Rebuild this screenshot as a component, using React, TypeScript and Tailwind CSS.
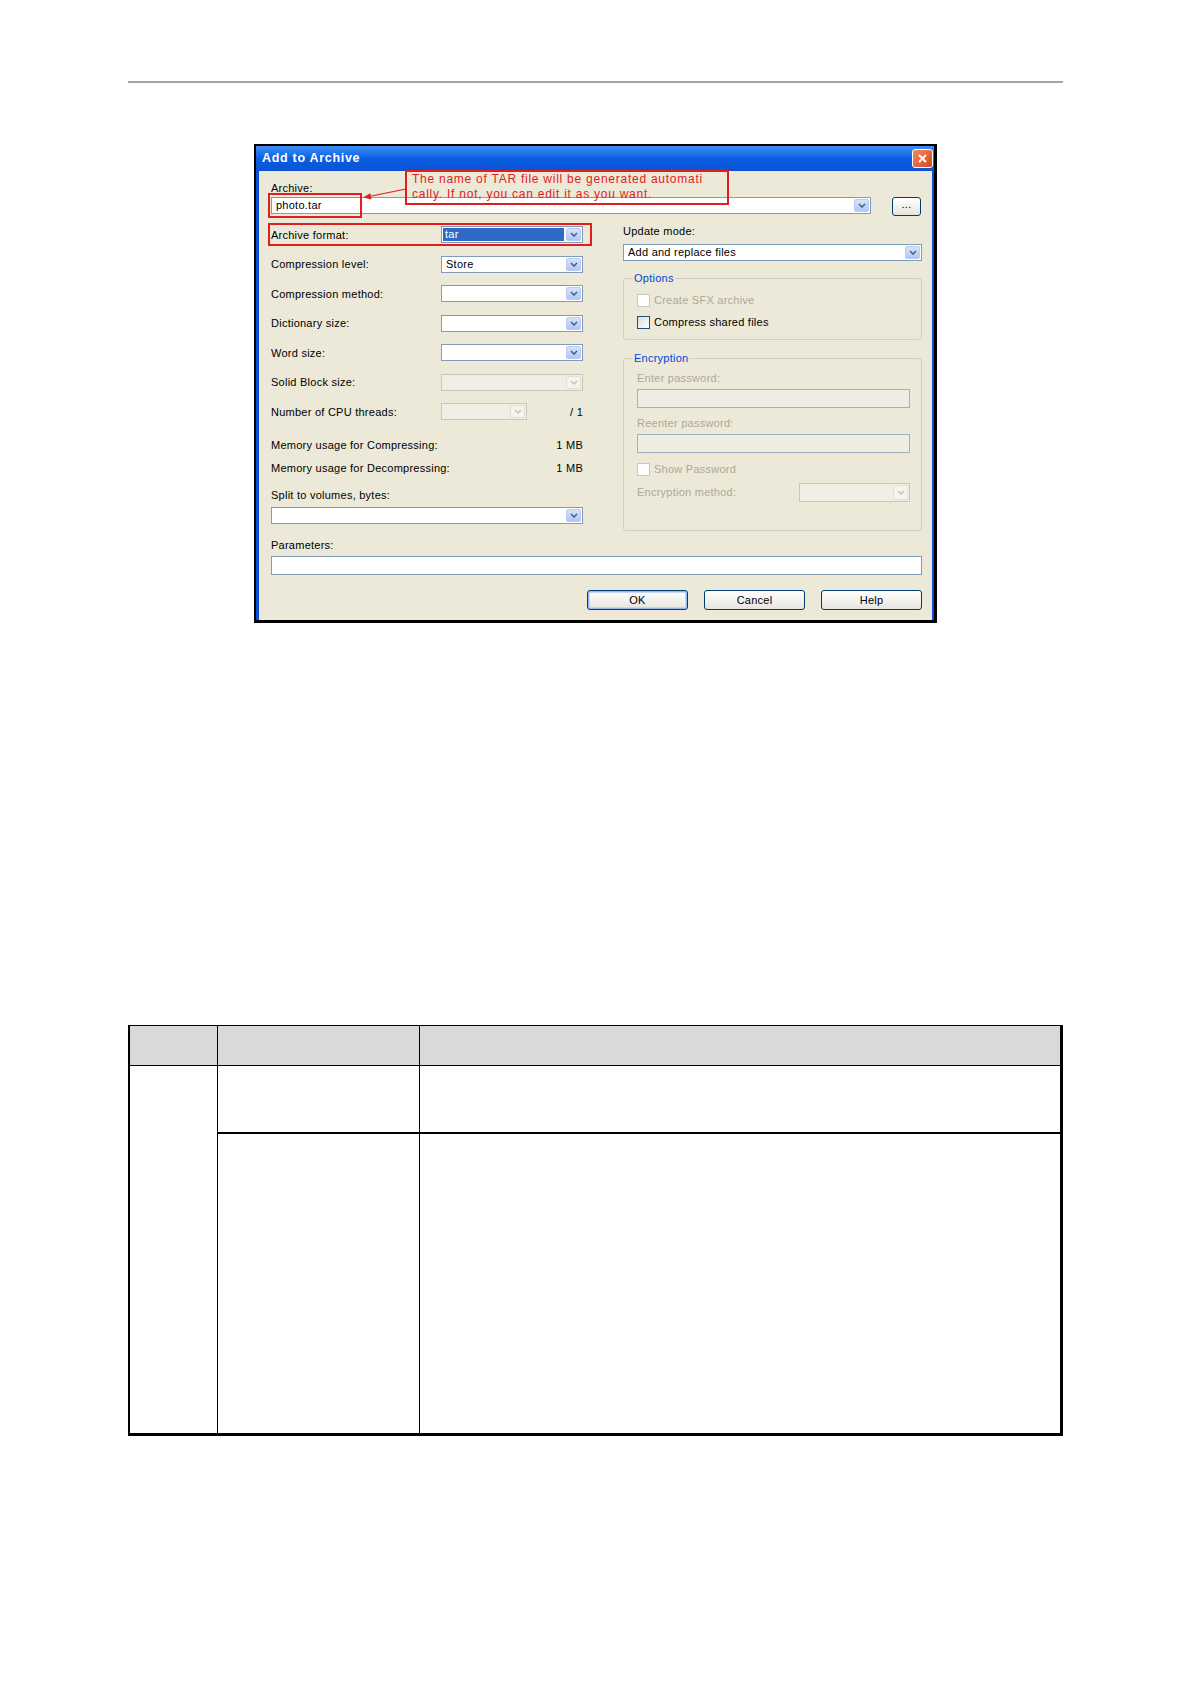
import type { ReactNode } from 'react'

const UI = "font-['Liberation_Sans','Arial',sans-serif] text-[11px] tracking-[0.25px]"

function Chevron({ disabled }: { disabled?: boolean }) {
  return (
    <svg width="8" height="5" viewBox="0 0 8 5" className="block">
      <path
        d="M1 1 L4 4 L7 1"
        fill="none"
        stroke={disabled ? '#c9c7ba' : '#4d6185'}
        strokeWidth="1.6"
      />
    </svg>
  )
}

function Combo({
  value,
  className,
  disabled,
  selected,
  tall,
}: {
  value?: string
  className: string
  disabled?: boolean
  selected?: boolean
  tall?: boolean
}) {
  return (
    <div
      className={`flex ${tall ? 'h-[19px]' : 'h-[17px]'} items-stretch border ${
        disabled ? 'border-[#c9c7ba] bg-[#f1efe5]' : 'border-[#7f9db9] bg-white'
      } ${className}`}
    >
      <div className="flex min-w-0 flex-1 items-stretch p-[1px]">
        {selected ? (
          <div className="flex flex-1 items-center bg-[#316ac5] pl-[2px] leading-none text-white">
            {value}
          </div>
        ) : (
          <div className="flex flex-1 items-center pl-[3px] leading-none text-black">{value}</div>
        )}
      </div>
      <div
        className={`m-[1px] flex w-[15px] items-center justify-center rounded-[2px] border ${
          disabled
            ? 'border-[#e2e0d6] bg-[#f4f3ee]'
            : 'border-[#b9cbf3] bg-gradient-to-b from-[#d7e3fd] to-[#b2c7f6]'
        }`}
      >
        <Chevron disabled={disabled} />
      </div>
    </div>
  )
}

function Check({ label, disabled }: { label: string; disabled?: boolean }) {
  return (
    <div className="flex h-[14px] items-center gap-[4px]">
      <div
        className={`h-[13px] w-[13px] border ${
          disabled
            ? 'border-[#cac8bb] bg-white'
            : 'border-[#1c5180] bg-gradient-to-br from-[#dcdcd6] to-white'
        }`}
      />
      <span className={disabled ? 'text-[#aca899]' : 'text-black'}>{label}</span>
    </div>
  )
}

function Group({ title, className, children }: { title: string; className: string; children: ReactNode }) {
  return (
    <div className={`relative rounded-[3px] border border-[#d0d0bf] ${className}`}>
      <span className="absolute left-[9px] top-[-8px] bg-[#ece9d8] px-[1px] leading-[14px] text-[#0046d5]">
        {title}
      </span>
      {children}
    </div>
  )
}

function Row({ label, children }: { label: string; children: ReactNode }) {
  return (
    <div className="flex h-[29.5px] items-center">
      <span className="flex-1">{label}</span>
      {children}
    </div>
  )
}

function Button({ label, focused }: { label: string; focused?: boolean }) {
  return (
    <div
      className={`flex h-[20px] items-center justify-center rounded-[3px] border border-[#003c74] bg-gradient-to-b from-white to-[#e6e5df] ${
        focused ? 'w-[101px] shadow-[inset_0_0_0_1px_#98b8f5,inset_0_0_0_2px_#c6d6fb]' : 'w-[101px]'
      }`}
    >
      {label}
    </div>
  )
}

function Dialog() {
  return (
    <div className={`ml-[126px] mt-[61px] flex h-[479px] w-[683px] flex-col border-b-[3px] border-l-2 border-r-[3px] border-t-2 border-black ${UI}`}>
      {/* title bar */}
      <div className="flex h-[25px] items-center justify-between bg-gradient-to-b from-[#3d8ff5] via-[#0a5ee4] to-[#0b52d3] pl-[6px] pr-[1px]">
        <span className="text-[12.5px] font-bold tracking-[0.7px] text-white">Add to Archive</span>
        <div className="flex h-[19px] w-[21px] items-center justify-center rounded-[3px] border border-white bg-gradient-to-br from-[#f08a5f] to-[#d8441c]">
          <svg width="11" height="11" viewBox="0 0 11 11">
            <path d="M2 2 L9 9 M9 2 L2 9" stroke="white" strokeWidth="2" />
          </svg>
        </div>
      </div>

      {/* body */}
      <div className="relative flex flex-1 flex-col border-l-[3px] border-r-2 border-[#0b4fd4] bg-[#ece9d8] pl-[12px] pr-[10px] pt-[10px] text-black">
        <span className="h-[14px] leading-[14px]">Archive:</span>
        <div className="mt-[2px] flex h-[19px] items-start gap-[21px]">
          <Combo value="photo.tar" className="w-[600px]" />
          <div className="h-[19px] w-[29px] rounded-[3px] border border-[#003c74] bg-gradient-to-b from-white to-[#e6e5df] text-center leading-[12px]">
            ...
          </div>
        </div>

        <div className="mt-[4px] flex gap-[40px]">
          {/* left column */}
          <div className="flex w-[312px] flex-col">
            <Row label="Archive format:">
              <Combo value="tar" selected className="w-[142px]" />
            </Row>
            <Row label="Compression level:">
              <Combo value="Store" className="w-[142px]" />
            </Row>
            <Row label="Compression method:">
              <Combo className="w-[142px]" />
            </Row>
            <Row label="Dictionary size:">
              <Combo className="w-[142px]" />
            </Row>
            <Row label="Word size:">
              <Combo className="w-[142px]" />
            </Row>
            <Row label="Solid Block size:">
              <Combo disabled className="w-[142px]" />
            </Row>
            <div className="flex h-[29.5px] items-center">
              <span className="w-[170px]">Number of CPU threads:</span>
              <Combo disabled className="w-[86px]" />
              <span className="ml-auto">/ 1</span>
            </div>
            <div className="mt-[7px] flex h-[23px] items-center justify-between">
              <span>Memory usage for Compressing:</span>
              <span>1 MB</span>
            </div>
            <div className="flex h-[23px] items-center justify-between">
              <span>Memory usage for Decompressing:</span>
              <span>1 MB</span>
            </div>
            <span className="mt-[8.5px] h-[14px] leading-[14px]">Split to volumes, bytes:</span>
            <Combo className="mt-[5px] w-full" />
          </div>

          {/* right column */}
          <div className="flex w-[299px] flex-col pt-[4px]">
            <span className="h-[14px] leading-[14px]">Update mode:</span>
            <Combo value="Add and replace files" className="mt-[6px] w-full" />
            <Group title="Options" className="mt-[17px] h-[62px] pl-[13px] pt-[14px]">
              <Check label="Create SFX archive" disabled />
              <div className="mt-[8px]">
                <Check label="Compress shared files" />
              </div>
            </Group>
            <Group title="Encryption" className="mt-[18px] flex h-[173px] flex-col pl-[13px] pr-[11px] pt-[12px] text-[#aca899]">
              <span className="h-[14px] leading-[14px]">Enter password:</span>
              <div className="mt-[4px] h-[19px] border border-[#9fb0c2] bg-[#efede3]" />
              <span className="mt-[8px] h-[14px] leading-[14px]">Reenter password:</span>
              <div className="mt-[4px] h-[19px] border border-[#9fb0c2] bg-[#efede3]" />
              <div className="mt-[9px]">
                <Check label="Show Password" disabled />
              </div>
              <div className="mt-[7px] flex h-[19px] items-center">
                <span className="flex-1">Encryption method:</span>
                <Combo disabled tall className="w-[111px]" />
              </div>
            </Group>
          </div>
        </div>

        <span className="mt-[7px] h-[14px] leading-[14px]">Parameters:</span>
        <div className="mt-[4px] h-[19px] border border-[#7f9db9] bg-white" />

        <div className="mt-[15px] flex justify-end gap-[16px]">
          <Button label="OK" focused />
          <Button label="Cancel" />
          <Button label="Help" />
        </div>

        {/* red annotations */}
        <div className="absolute left-[146px] top-[-1px] h-[35px] w-[324px] border-2 border-[#e11d1d] pl-[5px] text-[12px] leading-[15px] tracking-[0.75px] text-[#e11d1d]">
          <div>The name of TAR file will be generated automati</div>
          <div>cally. If not, you can edit it as you want.</div>
        </div>
        <div className="absolute left-[9px] top-[22px] h-[25px] w-[94px] border-2 border-[#e11d1d]" />
        <div className="absolute left-[9px] top-[52px] h-[23px] w-[324px] border-2 border-[#e11d1d]" />
        <svg className="absolute left-[100px] top-[12px]" width="50" height="20" viewBox="0 0 50 20">
          <line x1="47" y1="6" x2="10" y2="13.5" stroke="#e11d1d" strokeWidth="1.2" />
          <polygon points="4,14.6 12.5,16.4 11.3,10.2" fill="#e11d1d" />
        </svg>
      </div>
    </div>
  )
}

function EmptyTable() {
  return (
    <div className="mt-[402px] flex w-[935px] flex-col border-b-[3px] border-l-2 border-r-[3px] border-t border-black">
      <div className="flex h-[40px] border-b border-black bg-[#d9d9d9]">
        <div className="w-[88px] border-r border-black" />
        <div className="w-[202px] border-r border-black" />
        <div className="flex-1" />
      </div>
      <div className="flex h-[367px]">
        <div className="w-[88px] border-r border-black" />
        <div className="flex flex-1 flex-col">
          <div className="flex h-[68px] border-b-2 border-black">
            <div className="w-[202px] border-r border-black" />
            <div className="flex-1" />
          </div>
          <div className="flex flex-1">
            <div className="w-[202px] border-r border-black" />
            <div className="flex-1" />
          </div>
        </div>
      </div>
    </div>
  )
}

export default function App() {
  return (
    <div className="h-[1684px] w-[1191px] bg-white">
      <div className="ml-[128px] flex w-[935px] flex-col pt-[81px]">
        <div className="h-[2px] bg-[#a6a6a6]" />
        <Dialog />
        <EmptyTable />
      </div>
    </div>
  )
}
